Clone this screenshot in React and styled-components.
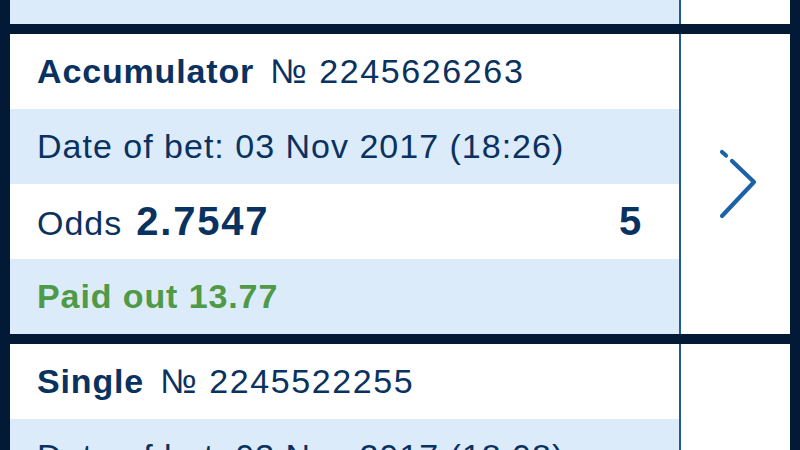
import React from "react";
import styled, { createGlobalStyle } from "styled-components";

const Global = createGlobalStyle`
  html, body { margin: 0; padding: 0; background: #021a36; }
  body { font-family: "Liberation Sans", Arial, sans-serif; }
`;

const Viewport = styled.div`
  width: 800px;
  height: 450px;
  overflow: hidden;
  background: #021a36;
`;

const List = styled.div`
  display: flex;
  flex-direction: column;
  gap: 10px;
  padding: 0 10px;
`;

const Card = styled.div`
  display: grid;
  grid-template-columns: 669px 2px 1fr;
  background: #ffffff;
`;

const Rows = styled.div`
  display: flex;
  flex-direction: column;
`;

const Divider = styled.div`
  background: #1d5d97;
`;

const Row = styled.div`
  height: ${(p) => p.$h || 75}px;
  display: flex;
  align-items: center;
  justify-content: space-between;
  padding: 0 37px 0 27px;
  background: ${(p) => (p.$tint ? "#dcebfa" : "#ffffff")};
  color: #0a3260;
  font-size: 34px;
  letter-spacing: 1px;
  white-space: nowrap;
`;

const Group = styled.div`
  display: flex;
  align-items: baseline;
  gap: ${(p) => p.$gap || 14}px;
`;

const Number = styled.span`
  letter-spacing: 1.6px;
`;

const Strong = styled.span`
  font-weight: 700;
  font-size: ${(p) => p.$size || 34}px;
  letter-spacing: ${(p) => p.$track || 0.85}px;
`;

const Paid = styled.span`
  font-weight: 700;
  color: #4e9a46;
  letter-spacing: 0.9px;
`;

const Side = styled.div`
  display: flex;
  align-items: center;
  justify-content: center;
  background: #ffffff;
`;

const Chevron = () => (
  <svg width="42" height="72" viewBox="0 0 42 72" style={{ marginLeft: 6, marginTop: 2 }}>
    <g fill="none" stroke="#1d62a6" strokeWidth="4.2" strokeLinecap="round" strokeLinejoin="round">
      <path d="M4 3 L8 6.5" />
      <path d="M14 12 L36 33 L4 67" />
    </g>
  </svg>
);

const bets = [
  { type: "Accumulator", no: "2245626263", date: "03 Nov 2017 (18:26)", odds: "2.7547", count: "5", paid: "Paid out 13.77", full: true },
  { type: "Single", no: "2245522255", date: "03 Nov 2017 (18:08)", full: false },
];

const BetCard = ({ bet }) => (
  <Card>
    <Rows>
      <Row>
        <Group $gap={16}>
          <Strong>{bet.type}</Strong>
          <Number>№ {bet.no}</Number>
        </Group>
      </Row>
      <Row $tint>
        <span>Date of bet: {bet.date}</span>
      </Row>
      {bet.full && (
        <>
          <Row>
            <Group $gap={14}>
              <span>Odds</span>
              <Strong $size={40} $track={1.8}>{bet.odds}</Strong>
            </Group>
            <Strong $size={40} $track={0}>{bet.count}</Strong>
          </Row>
          <Row $tint>
            <Paid>{bet.paid}</Paid>
          </Row>
        </>
      )}
    </Rows>
    <Divider />
    <Side>{bet.full && <Chevron />}</Side>
  </Card>
);

const PreviousTail = () => (
  <Card>
    <Rows>
      <Row $tint $h={24} />
    </Rows>
    <Divider />
    <Side />
  </Card>
);

export default function App() {
  return (
    <Viewport>
      <Global />
      <List>
        <PreviousTail />
        {bets.map((b) => (
          <BetCard key={b.no} bet={b} />
        ))}
      </List>
    </Viewport>
  );
}
